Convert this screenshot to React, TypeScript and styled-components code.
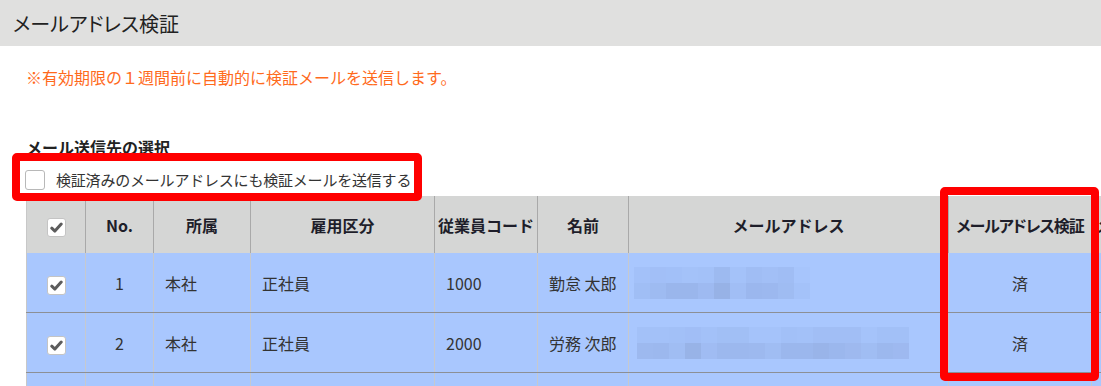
import React from 'react';
import styled, { createGlobalStyle } from 'styled-components';

const GlobalStyle = createGlobalStyle`
  html, body {
    margin: 0;
    padding: 0;
    background: #ffffff;
    overflow: hidden;
  }
  body {
    font-family: "Noto Sans CJK JP", "Noto Sans", sans-serif;
    color: #333333;
  }
`;

interface Employee {
  no: number | '';
  dept: string;
  kind: string;
  code: string;
  name: string;
  mail: string[][];
  mailOffset: number;
  verified: string;
  checked: boolean;
}

// pixelated (blurred) mail address blocks, top row then bottom row
const employees: Employee[] = [
  {
    no: 1,
    dept: '本社',
    kind: '正社員',
    code: '1000',
    name: '勤怠 太郎',
    mailOffset: 5,
    mail: [
      ['#a3c1f9', '#a2bff7', '#a2c0f8', '#a4c2f9', '#a3c1f8', '#9dbaf0', '#a4c2f9', '#a0bdf4', '#a2bff6', '#a0bdf4', '#a7c5fc'],
      ['#a0bef5', '#9ebbf1', '#9ab6ec', '#9ab6ec', '#9ebaf1', '#97b2e6', '#a1bef5', '#9bb7ee', '#9cb8ef', '#9fbcf2', '#a4c2f9'],
    ],
    verified: '済',
    checked: true,
  },
  {
    no: 2,
    dept: '本社',
    kind: '正社員',
    code: '2000',
    name: '労務 次郎',
    mailOffset: 8,
    mail: [
      ['#a3c1f8', '#a3c1f8', '#a2c0f7', '#a1bef6', '#a3c1f8', '#a1bff5', '#a1bff5', '#a5c3fa', '#a5c3fa', '#a2c0f7', '#a3c1f8', '#a1bef5', '#a1bef5', '#a1bef5', '#a5c3fa', '#a2c0f7', '#a2c0f7'],
      ['#9db9ef', '#9cb8ee', '#a0bdf3', '#98b3e7', '#a0bcf3', '#9cb8ee', '#9cb8ee', '#9db9ef', '#a0bdf3', '#9bb7ed', '#9bb7ed', '#99b4e9', '#9bb7ed', '#9eb9ef', '#a0bdf3', '#9cb8ee', '#9eb9f0'],
    ],
    verified: '済',
    checked: true,
  },
  // next row, only its top edge shows in the viewport
  {
    no: '',
    dept: '',
    kind: '',
    code: '',
    name: '',
    mailOffset: 0,
    mail: [[], []],
    verified: '',
    checked: false,
  },
];

const columns = [
  { key: 'check', label: '', width: 59 },
  { key: 'no', label: 'No.', width: 68 },
  { key: 'dept', label: '所属', width: 97 },
  { key: 'kind', label: '雇用区分', width: 184 },
  { key: 'code', label: '従業員コード', width: 103 },
  { key: 'name', label: '名前', width: 91 },
  { key: 'mail', label: 'メールアドレス', width: 320 },
  { key: 'verify', label: 'メールアドレス検証', width: 143 },
  { key: 'date', label: 'メ', width: 150 },
];

const CheckMark: React.FC = () => (
  <svg width="13" height="11" viewBox="0 0 13 11">
    <path
      d="M1.8 6.2 L4.9 9.1 L11.2 2"
      fill="none"
      stroke="#5c5c5c"
      strokeWidth="3"
      strokeLinecap="round"
      strokeLinejoin="round"
    />
  </svg>
);

const Mosaic: React.FC<{ blocks: string[][] }> = ({ blocks }) => {
  const cols = blocks[0].length;
  if (!cols) return null;
  return (
    <svg width={cols * 16} height={32} viewBox={`0 0 ${cols * 16} 32`}>
      {blocks.map((row, r) =>
        row.map((c, i) => <rect key={`${r}-${i}`} x={i * 16} y={r * 16} width={16} height={16} fill={c} />)
      )}
    </svg>
  );
};

const App: React.FC = () => {
  return (
    <Page>
      <GlobalStyle />
      <TitleBar>メールアドレス検証</TitleBar>
      <Content>
        <Note>※有効期限の１週間前に自動的に検証メールを送信します。</Note>
        <SectionTitle>メール送信先の選択</SectionTitle>
        <OptionRow>
          <CheckBox />
          <OptionLabel>検証済みのメールアドレスにも検証メールを送信する</OptionLabel>
        </OptionRow>
        <Table>
          <colgroup>
            {columns.map((c) => (
              <col key={c.key} style={{ width: c.width }} />
            ))}
          </colgroup>
          <thead>
            <tr>
              {columns.map((c) => (
                <Th key={c.key} tight={c.key === 'verify'} lead={c.key === 'date'}>
                  {c.key === 'check' ? (
                    <CheckBox checked>
                      <CheckMark />
                    </CheckBox>
                  ) : (
                    c.label
                  )}
                </Th>
              ))}
            </tr>
          </thead>
          <tbody>
            {employees.map((e, idx) => (
              <tr key={idx}>
                <Td align="center">
                  {e.checked && (
                    <CheckBox checked>
                      <CheckMark />
                    </CheckBox>
                  )}
                </Td>
                <Td align="center">{e.no}</Td>
                <Td>{e.dept}</Td>
                <Td>{e.kind}</Td>
                <Td>{e.code}</Td>
                <Td>{e.name}</Td>
                <MailCell>
                  <MailBlur offset={e.mailOffset}>
                    <Mosaic blocks={e.mail} />
                  </MailBlur>
                </MailCell>
                <Td align="center">{e.verified}</Td>
                <Td align="center"></Td>
              </tr>
            ))}
          </tbody>
        </Table>
      </Content>
      <Highlight style={{ left: 12, top: 153, width: 410, height: 48 }} />
      <Highlight style={{ left: 940, top: 187, width: 159, height: 194 }} />
    </Page>
  );
};

const Page = styled.div`
  position: relative;
  width: 1101px;
  height: 386px;
  overflow: hidden;
`;

const TitleBar = styled.div`
  height: 46px;
  background: #e0e0df;
  display: flex;
  align-items: center;
  padding-left: 13px;
  font-size: 20px;
  color: #222222;
  font-feature-settings: "palt";
`;

const Content = styled.div`
  padding-left: 26px;
`;

const Note = styled.div`
  margin-top: 19px;
  height: 24px;
  line-height: 24px;
  font-size: 16px;
  color: #ff6a1c;
`;

const SectionTitle = styled.div`
  margin-top: 46px;
  height: 24px;
  line-height: 24px;
  font-size: 16px;
  font-weight: 700;
  color: #222222;
`;

const OptionRow = styled.div`
  margin-top: 9px;
  height: 24px;
  display: flex;
  align-items: center;
  gap: 11px;
  margin-left: -1px;
`;

const CheckBox = styled.span<{ checked?: boolean }>`
  display: inline-flex;
  align-items: center;
  justify-content: center;
  box-sizing: border-box;
  width: ${({ checked }) => (checked ? '19px' : '20px')};
  height: ${({ checked }) => (checked ? '19px' : '20px')};
  background: #ffffff;
  border: 1px solid ${({ checked }) => (checked ? '#c4c4c4' : '#b8b8b8')};
  border-radius: 3px;
  vertical-align: middle;
`;

const OptionLabel = styled.span`
  font-size: 15px;
  color: #333333;
  line-height: 24px;
  letter-spacing: -0.2px;
`;

const Table = styled.table`
  margin-top: 4px;
  border-collapse: collapse;
  table-layout: fixed;
  width: 1215px;
  border-left: 1px solid #c8c8c8;
`;

const Th = styled.th<{ tight?: boolean; lead?: boolean }>`
  height: 57px;
  padding: 0 0 0 ${({ lead }) => (lead ? '4px' : '0')};
  background: #d5d6d5;
  border-right: 1px solid #a9a9a9;
  font-size: 16px;
  font-weight: 700;
  color: #1e1e2a;
  text-align: ${({ lead }) => (lead ? 'left' : 'center')};
  white-space: nowrap;
  overflow: hidden;
  letter-spacing: ${({ tight }) => (tight ? '-1px' : '0')};
  font-feature-settings: ${({ tight }) => (tight ? '"palt"' : 'normal')};
`;

const Td = styled.td<{ align?: 'left' | 'center' }>`
  height: 59px;
  padding: 0 ${({ align }) => (align === 'center' ? '0' : '11px')};
  background: #a9c7fe;
  border-right: 1px solid #c6c9cf;
  border-bottom: 1px solid #8c8f95;
  font-size: 16px;
  color: #333333;
  text-align: ${({ align }) => align || 'left'};
  white-space: nowrap;
`;

const MailCell = styled(Td)`
  padding: 0;
`;

const MailBlur = styled.div<{ offset: number }>`
  display: flex;
  padding-left: ${({ offset }) => offset}px;
`;

const Highlight = styled.div`
  position: absolute;
  box-sizing: border-box;
  border: 8px solid #ff0000;
  border-radius: 5px;
  pointer-events: none;
`;

export default App;
